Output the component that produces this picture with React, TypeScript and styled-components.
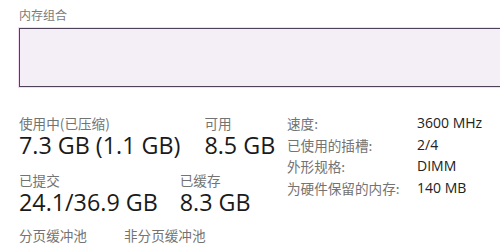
import React from "react";
import styled, { createGlobalStyle } from "styled-components";

const Global = createGlobalStyle`
  html, body { margin: 0; padding: 0; background: #ffffff; }
  body {
    width: 500px; height: 250px; overflow: hidden;
    font-family: "Open Sans", "Noto Sans CJK SC", sans-serif;
  }
`;

const Page = styled.div`
  width: 500px;
  height: 250px;
  box-sizing: border-box;
  padding: 8px 0 0 19px;
  overflow: hidden;
  background: #fff;
`;

const Caption = styled.div`
  font-family: "Noto Sans CJK SC", sans-serif;
  font-size: 12px;
  line-height: 14px;
  color: #7a7a7a;
  height: 20px;
`;

const Composition = styled.div`
  height: 57px;
  margin-right: -20px;
  background: #f4eef6;
  border: 1px solid #4d4257;
  box-shadow: 0 0 0 1px #f6dcf3;
`;

const Lower = styled.div`
  display: flex;
  align-items: flex-start;
  margin-top: 27px;
`;

const Stats = styled.div`
  width: 268px;
  display: flex;
  flex-direction: column;
`;

const StatRow = styled.div<{ $gap: number; $mb: number }>`
  display: flex;
  gap: ${(p) => p.$gap}px;
  margin-bottom: ${(p) => p.$mb}px;
`;

const Stat = styled.div`
  display: flex;
  flex-direction: column;
`;

const Label = styled.div`
  font-family: "Noto Sans CJK SC", sans-serif;
  font-size: 13.6px;
  line-height: 18px;
  color: #737373;
  white-space: nowrap;
`;

const Big = styled.div`
  font-family: "Open Sans", "Noto Sans CJK SC", sans-serif;
  font-size: 23.3px;
  line-height: 26px;
  color: #1a1a1a;
  white-space: nowrap;
`;

const Specs = styled.div`
  display: grid;
  grid-template-columns: 130px auto;
  row-gap: 3.5px;
`;

const SpecKey = styled.div`
  font-family: "Noto Sans CJK SC", sans-serif;
  font-size: 13.6px;
  line-height: 18px;
  color: #737373;
  white-space: nowrap;
`;

const SpecVal = styled.div`
  font-family: "Open Sans", sans-serif;
  font-size: 14px;
  line-height: 18px;
  color: #222;
  white-space: nowrap;
`;

const specs: [string, string][] = [
  ["速度:", "3600 MHz"],
  ["已使用的插槽:", "2/4"],
  ["外形规格:", "DIMM"],
  ["为硬件保留的内存:", "140 MB"],
];

export default function App() {
  return (
    <Page>
      <Global />
      <Caption>内存组合</Caption>
      <Composition />
      <Lower>
        <Stats>
          <StatRow $gap={24} $mb={13}>
            <Stat>
              <Label>使用中(已压缩)</Label>
              <Big>7.3 GB (1.1 GB)</Big>
            </Stat>
            <Stat>
              <Label>可用</Label>
              <Big>8.5 GB</Big>
            </Stat>
          </StatRow>
          <StatRow $gap={22} $mb={11}>
            <Stat>
              <Label>已提交</Label>
              <Big>24.1/36.9 GB</Big>
            </Stat>
            <Stat>
              <Label>已缓存</Label>
              <Big>8.3 GB</Big>
            </Stat>
          </StatRow>
          <StatRow $gap={37} $mb={0}>
            <Stat>
              <Label>分页缓冲池</Label>
            </Stat>
            <Stat>
              <Label>非分页缓冲池</Label>
            </Stat>
          </StatRow>
        </Stats>
        <Specs>
          {specs.map(([k, v]) => (
            <React.Fragment key={k}>
              <SpecKey>{k}</SpecKey>
              <SpecVal>{v}</SpecVal>
            </React.Fragment>
          ))}
        </Specs>
      </Lower>
    </Page>
  );
}
